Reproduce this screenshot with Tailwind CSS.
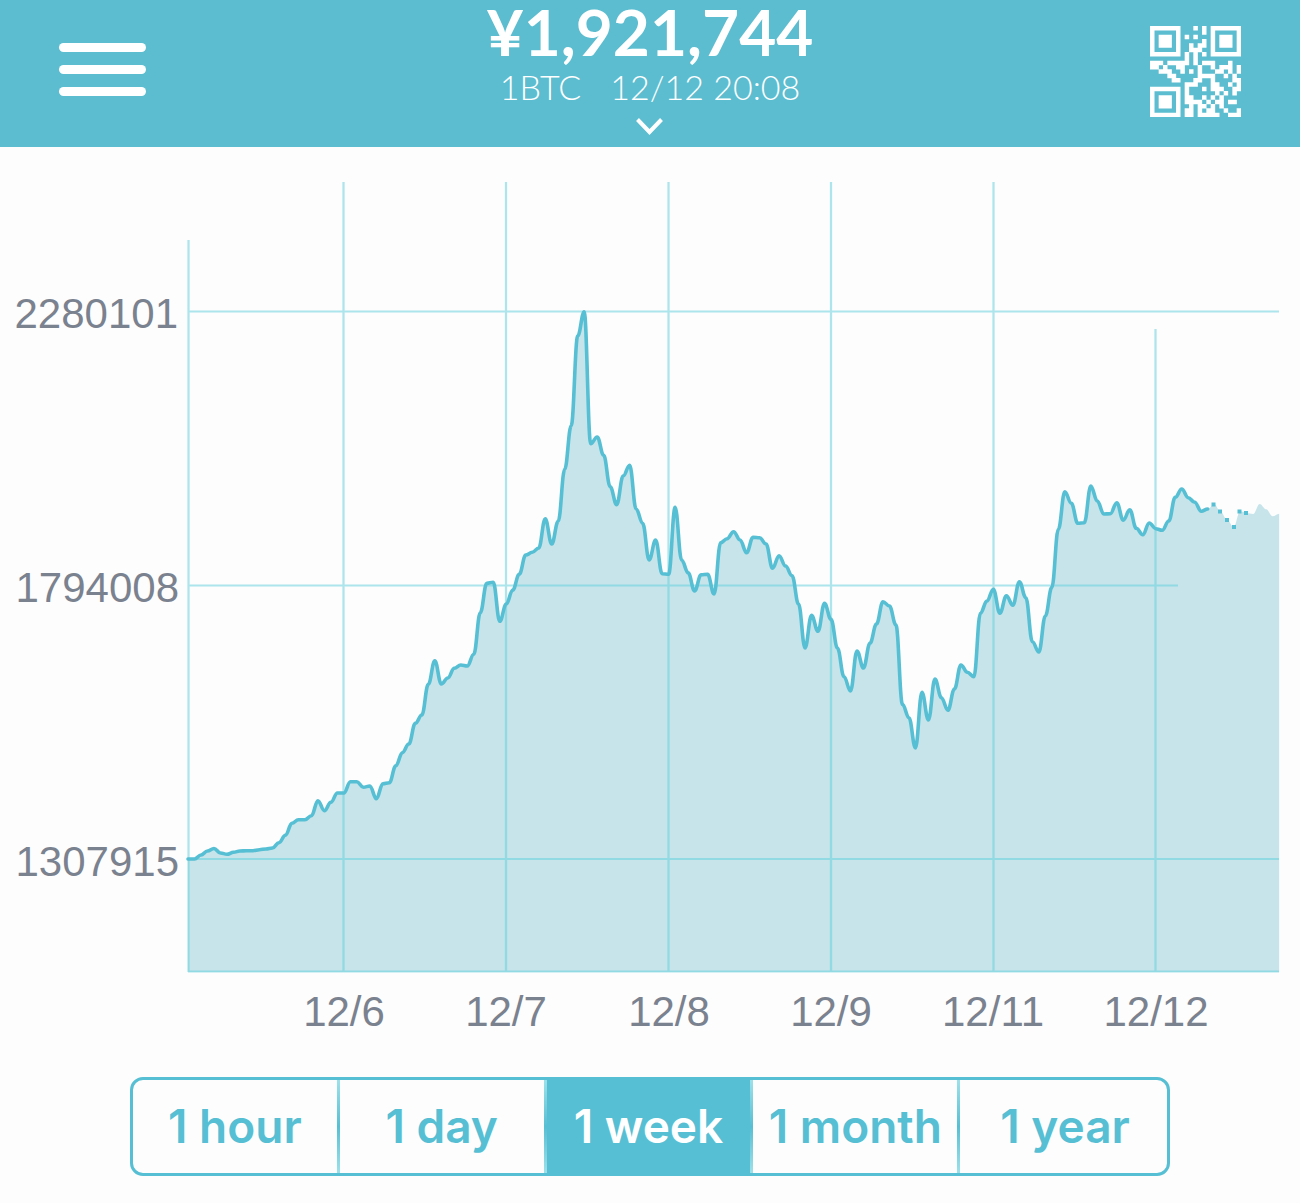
<!DOCTYPE html>
<html lang="en">
<head>
<meta charset="utf-8">
<meta name="viewport" content="width=device-width, initial-scale=1">
<title>BTC price</title>
<script src="https://cdn.jsdelivr.net/npm/@tailwindcss/browser@4"></script>
</head>
<body class="bg-[#fdfdfd] min-h-screen">
<header class="grid grid-cols-[1fr_auto_1fr] items-start bg-[#5bbdcf] h-[147px] px-[59px] text-white">
  <button type="button" aria-label="Menu" class="mt-[43px] flex w-[87px] flex-col gap-[13px]">
    <span class="h-[9px] w-full rounded-full bg-white"></span>
    <span class="h-[9px] w-full rounded-full bg-white"></span>
    <span class="h-[9px] w-full rounded-full bg-white"></span>
  </button>
  <button type="button" class="flex flex-col items-center font-['Lato',sans-serif]">
    <span class="text-[64px] leading-[64px] font-bold">¥1,921,744</span>
    <span class="flex gap-[29px] text-[34px] leading-[46px] font-light"><span>1BTC</span><span>12/12 20:08</span></span>
    <svg class="mt-[8px] h-[17px] w-[27px]" viewBox="0 0 27 17" fill="none" stroke="#fff" stroke-width="4"><path d="M1.5 1.5 13.5 14 25.5 1.5"/></svg>
  </button>
  <button type="button" aria-label="QR code" class="mt-[26px] justify-self-end">
    <svg id="qr" class="size-[91px]" viewBox="0 0 21 21" fill="#fff"></svg>
  </button>
</header>
<main>
  <svg class="block h-auto w-full" viewBox="0 147 1300 900" role="img" aria-label="Bitcoin price over one week">
    <path id="area" fill="#c6e4ea"/>
    <path stroke="#5ccedb" stroke-opacity=".5" stroke-width="2.2" fill="none" d="M188.500 240V972M343.500 182V972M506 182V972M668.500 182V972M831 182V972M993.500 182V972M1155.500 329V972M188 311.500H1279M188 585.500H1178M188 859H1279M188 971.500H1279"/>
    <path id="line" fill="none" stroke="#56bfd3" stroke-width="3.600" stroke-linecap="round" stroke-linejoin="round"/>
    <path fill="#56bfd3" d="M1211.500 502.500h4v4h-4zM1218 509.500h4v4h-4zM1225 518h4v4h-4zM1232 525h4v4h-4zM1237.500 509.500h4v4h-4zM1244 511h4v4h-4z"/>
    <g class="font-['Liberation_Sans',sans-serif] text-[42px]" fill="#7b828f">
      <g text-anchor="end">
        <text x="178" y="328">2280101</text>
        <text x="179" y="602">1794008</text>
        <text x="179" y="876">1307915</text>
      </g>
      <g text-anchor="middle">
        <text x="344" y="1026">12/6</text>
        <text x="506" y="1026">12/7</text>
        <text x="669" y="1026">12/8</text>
        <text x="831" y="1026">12/9</text>
        <text x="993" y="1026">12/11</text>
        <text x="1156" y="1026">12/12</text>
      </g>
    </g>
  </svg>
  <nav aria-label="Period" class="mx-[10%] mt-[30px] mb-[27px] flex h-[99px] overflow-hidden rounded-[13px] border-[3px] border-[#56bfd3] bg-[#fdfdfd] font-['Inter',sans-serif] text-[46px] font-semibold whitespace-nowrap text-[#56bfd3]">
    <button type="button" class="flex-1 basis-0">1 hour</button>
    <span class="-my-[3px] w-[3px] bg-linear-to-b from-[#a0e3eb] via-[#56bfd3] to-[#a0e3eb]"></span>
    <button type="button" class="flex-1 basis-0">1 day</button>
    <span class="-my-[3px] w-[3px] bg-linear-to-b from-[#a0e3eb] via-[#56bfd3] to-[#a0e3eb]"></span>
    <button type="button" aria-pressed="true" class="flex-1 basis-0 bg-[#56bfd3] text-white">1 week</button>
    <span class="-my-[3px] w-[3px] bg-linear-to-b from-[#a0e3eb] via-[#56bfd3] to-[#a0e3eb]"></span>
    <button type="button" class="flex-1 basis-0">1 month</button>
    <span class="-my-[3px] w-[3px] bg-linear-to-b from-[#a0e3eb] via-[#56bfd3] to-[#a0e3eb]"></span>
    <button type="button" class="flex-1 basis-0 pl-[3px]">1 year</button>
  </nav>
</main>
<script>
const prices = [859,859,855,851,848.5,853,854.3,852.3,851,850.7,850.7,849.7,849,848,842.7,835.3,823.3,819.7,819.7,815.7,800.7,810.7,802.3,793,793,
781.7,781.7,787.3,786,798.7,783.7,782.7,765.7,752.7,744,723.3,715,684.3,660.7,684,678,668.3,665,666,654.3,612.7,583.3,582.3,621.3,604,
590,574.3,555,552.3,548,518.7,544,521.3,469.3,425.7,336,311.7,443.7,437,455.3,486.7,504.7,476,465.3,509,523.3,560,540,573.7,574.3,
507.3,560,572.7,591,574.7,574.3,594,542.7,538.7,531.7,540,552.7,537.3,537.7,544,568.3,555.7,566,575.7,604,648,615.3,631.3,603.3,619.3,
648.3,676.7,691,651,668,643.3,624,601.7,606,625,704.3,717.7,748,692.3,720,679,697.7,710.3,689,665,672.3,676.7,613.3,601,589.3,
613.3,595.7,605.3,581.7,597.7,641.7,652,616,587.3,529.3,491.7,503.3,523.3,522.7,486,501,514,513.7,502.7,520.3,509.7,528.3,534.7,523,528.7,
530.3,521,497.3,489,497.7,502.3,511.3,509,504.3,512,520,527,511.3,513,514,504,509.3,516.3,513.7];
const x = k => 188 + 6.495 * k;
// Each hour eases into the next with level handles.
function curve(last) {
  let d = `M${x(0)} ${prices[0]}`;
  for (let k = 1; k <= last; k++) {
    d += `C${x(k - 1) + 2.6} ${prices[k - 1]} ${x(k) - 2.6} ${prices[k]} ${x(k)} ${prices[k]}`;
  }
  return d;
}
document.getElementById('line').setAttribute('d', curve(157));
document.getElementById('area').setAttribute('d', curve(168) + 'V972H188Z');

const modules = [
'#######...#.#.#######',
'#.....#.....#.#.....#',
'#.###.#.#.#...#.###.#',
'#.###.#.....#.#.###.#',
'#.###.#..#.##.#.###.#',
'#.....#..###..#.....#',
'#######.#.#.#.#######',
'........#.#..........',
'###.#####.#.###...#..',
'##.#..##...#..#.###.#',
'..###..#.#.#...##.#.#',
'....##.....####..#.#.',
'.....##...##..#....##',
'........###...##..#.#',
'#######.#...#.###..##',
'#.....#.#......#.#.#.',
'#.###.#.##..#.#.#....',
'#.###.#.####.#.##.##.',
'#.###.#..#.##.#.#....',
'#.....#.##.#.##..#..#',
'#######.##.#####..###'];
document.getElementById('qr').innerHTML = '<path d="' + modules.map((row, r) =>
  [...row].map((m, c) => m === '#' ? `M${c} ${r}h1.040v1.040h-1.040z` : '').join('')).join('') + '"/>';
</script>
</body>
</html>
